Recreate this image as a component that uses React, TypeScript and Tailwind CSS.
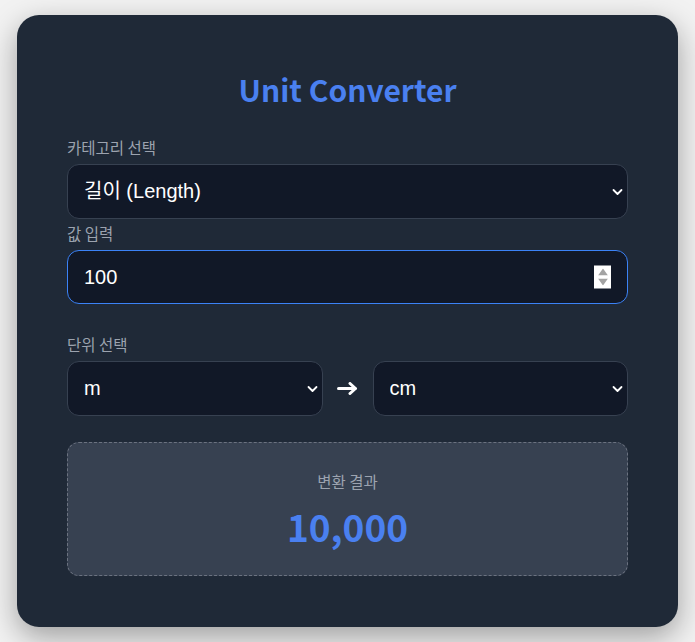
import React from "react";

const Chevron = () => (
  <svg
    className="pointer-events-none absolute right-[5px] top-1/2 -translate-y-1/2"
    width="11"
    height="7"
    viewBox="0 0 11 7"
    fill="none"
  >
    <path d="M1.5 1.5 L5.5 5.5 L9.5 1.5" stroke="#ffffff" strokeWidth="1.8" strokeLinecap="round" strokeLinejoin="round" />
  </svg>
);

const fieldFont = { fontFamily: '"Liberation Sans", Arial, "Noto Sans CJK KR", sans-serif' };

function SelectBox({ value, options }: { value: string; options: string[] }) {
  return (
    <div className="relative w-full">
      <select
        defaultValue={value}
        style={fieldFont}
        className="block h-[55px] w-full appearance-none rounded-xl border border-[#374151] bg-[#111827] px-4 text-[20px] leading-[23px] text-white outline-none"
      >
        {options.map((o) => (
          <option key={o} value={o}>
            {o}
          </option>
        ))}
      </select>
      <Chevron />
    </div>
  );
}

export default function App() {
  return (
    <div
      className="min-h-[642px] bg-[#f2f2f2] px-[17px] pt-[15px] pb-[16px]"
      style={{ fontFamily: '"Noto Sans CJK KR", "Noto Sans", sans-serif' }}
    >
      <div className="rounded-[22px] bg-[#1f2937] px-[50px] pt-[50px] pb-[51px] shadow-[0_10px_30px_rgba(0,0,0,0.35)]">
        <h1 className="mb-[24px] text-center text-[30px] font-bold leading-[48px] text-[#4a80f0]">
          Unit Converter
        </h1>

        <label className="mb-[7px] block text-[15.5px] leading-[20px] text-[#9ca3af]">카테고리 선택</label>
        <div className="mb-[4px]">
          <SelectBox value="길이 (Length)" options={["길이 (Length)", "무게 (Weight)", "온도 (Temperature)"]} />
        </div>

        <label className="mb-[7px] block text-[15.5px] leading-[20px] text-[#9ca3af]">값 입력</label>
        <div className="relative mb-[30px]">
          <input
            type="text"
            defaultValue="100"
            style={fieldFont}
            className="block h-[54px] w-full rounded-xl border border-[#3b82f6] bg-[#111827] px-4 text-[20px] leading-[22px] text-white outline-none"
          />
          <div className="pointer-events-none absolute right-[17px] top-1/2 flex h-[23px] w-[17px] -translate-y-1/2 flex-col items-center justify-center gap-[3px] bg-white">
            <svg width="10" height="7" viewBox="0 0 10 7">
              <path d="M5 0 L10 7 L0 7 Z" fill="#a3a3a3" />
            </svg>
            <svg width="10" height="7" viewBox="0 0 10 7">
              <path d="M0 0 L10 0 L5 7 Z" fill="#a3a3a3" />
            </svg>
          </div>
        </div>

        <label className="mb-[7px] block text-[15.5px] leading-[20px] text-[#9ca3af]">단위 선택</label>
        <div className="mb-[26px] flex items-center">
          <div className="flex-1">
            <SelectBox value="m" options={["m", "cm", "mm", "km"]} />
          </div>
          <div className="flex w-[50px] items-center justify-center">
            <svg width="21" height="13" viewBox="0 0 21 13" fill="none">
              <path d="M1.5 6.5 L18 6.5" stroke="#ffffff" strokeWidth="3" strokeLinecap="round" />
              <path d="M13 1.5 L18.5 6.5 L13 11.5" stroke="#ffffff" strokeWidth="3" strokeLinecap="round" strokeLinejoin="round" />
            </svg>
          </div>
          <div className="flex-1">
            <SelectBox value="cm" options={["m", "cm", "mm", "km"]} />
          </div>
        </div>

        <div className="rounded-xl border border-dashed border-[#6b7280] bg-[#374151] pt-[28px] pb-[22px] text-center">
          <div className="mb-[8px] text-[15.5px] leading-[20px] text-[#9ca3af]">변환 결과</div>
          <div className="text-[37px] font-bold leading-[54px] text-[#4a80f0]">10,000</div>
        </div>
      </div>
    </div>
  );
}
